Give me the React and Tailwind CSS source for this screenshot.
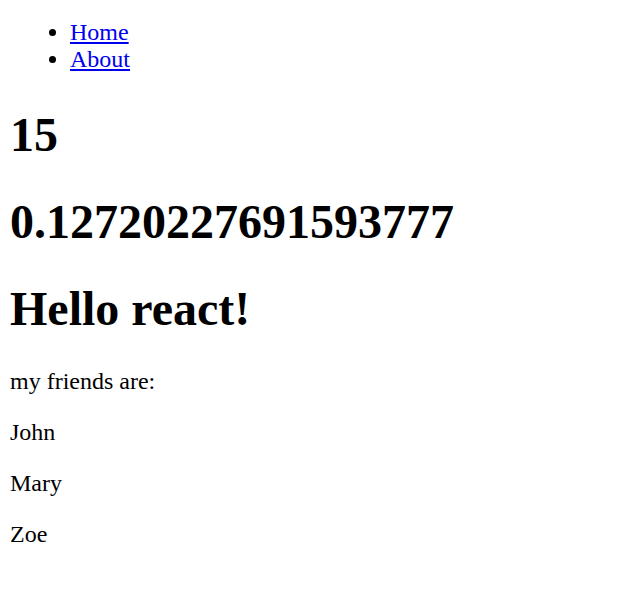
const friends = ["John", "Mary", "Zoe"];

export default function App() {
  return (
    <div className="px-[10px] pt-[19px] pb-8 font-['Liberation_Serif','Times_New_Roman',serif] text-[24px] leading-[normal] text-black bg-white">
      <ul className="list-disc pl-[60px]">
        <li>
          <a href="#" className="text-[#0000ee] underline">Home</a>
        </li>
        <li>
          <a href="#" className="text-[#0000ee] underline">About</a>
        </li>
      </ul>
      <h1 className="text-[48px] font-bold mt-[34px]">15</h1>
      <h1 className="text-[48px] font-bold mt-[32px]">0.12720227691593777</h1>
      <h1 className="text-[48px] font-bold mt-[32px]">Hello react!</h1>
      <p className="mt-[32px]">my friends are:</p>
      {friends.map((name) => (
        <p key={name} className="mt-[24px]">{name}</p>
      ))}
    </div>
  );
}
